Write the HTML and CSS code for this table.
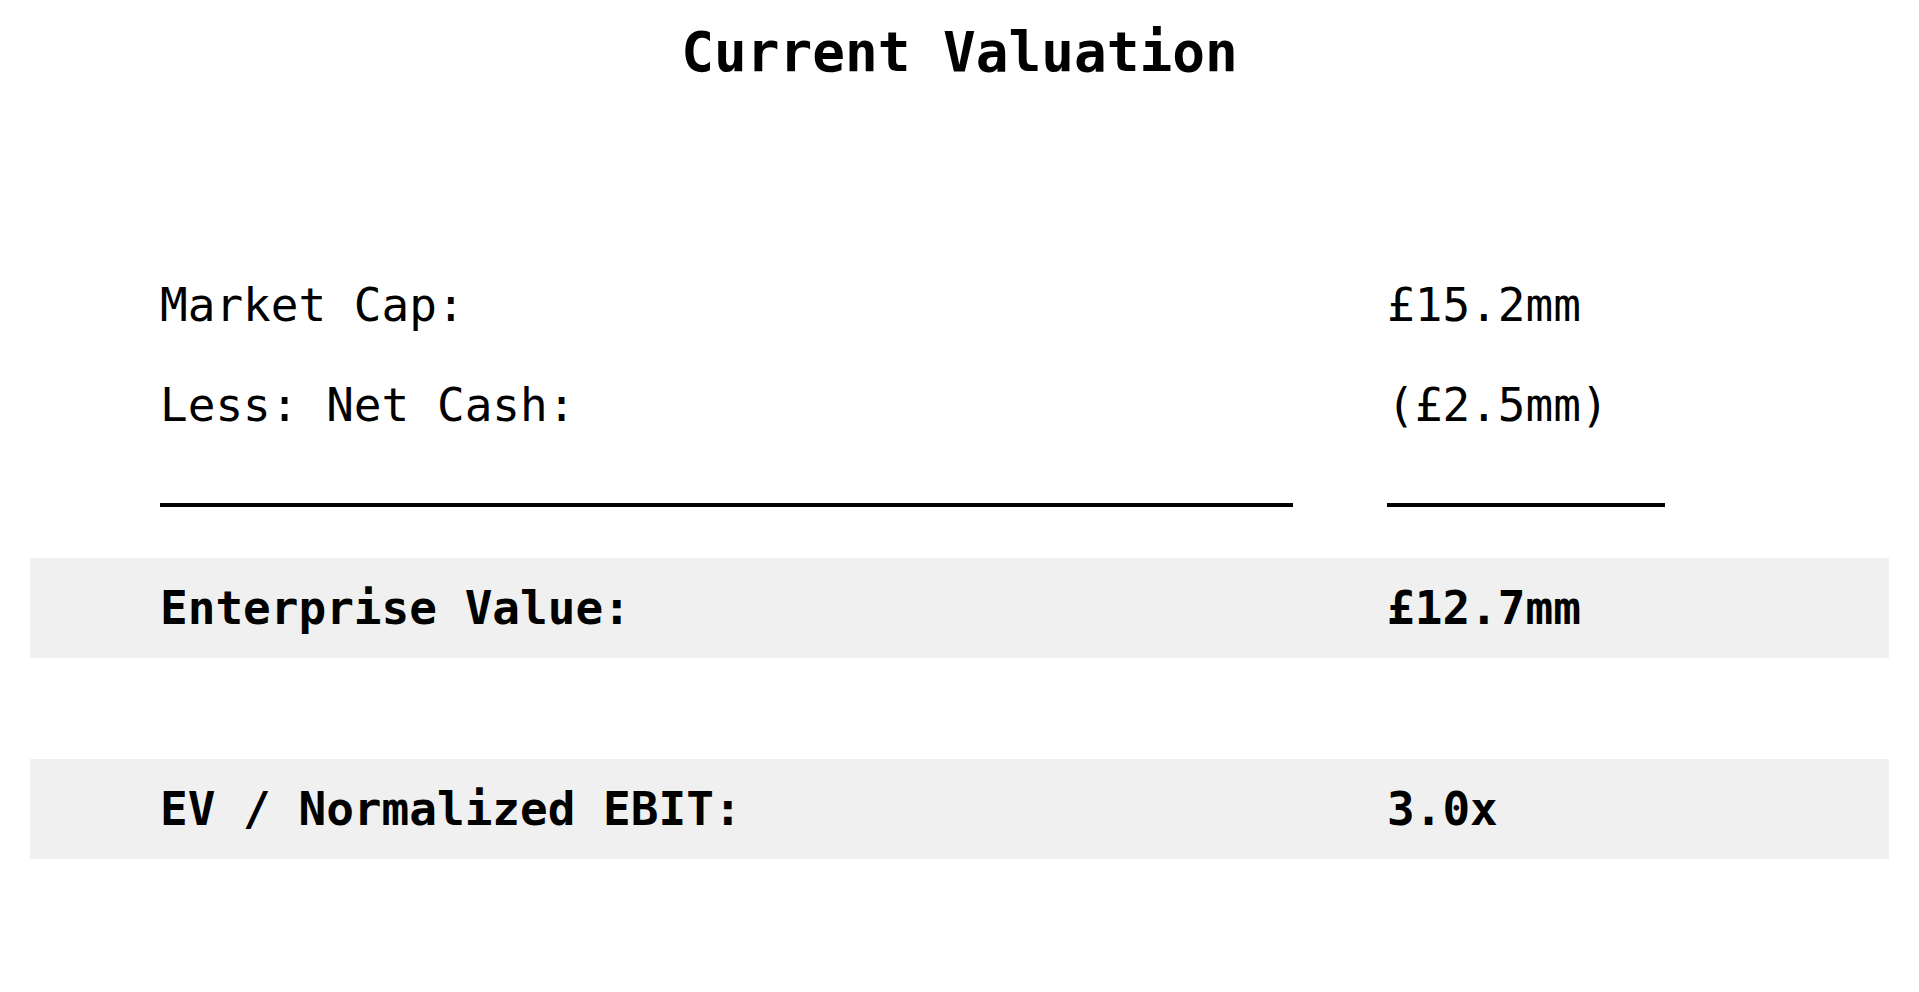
FILE: index.html
```html
<!DOCTYPE html>
<html lang="en">
<head>
<meta charset="utf-8">
<title>Current Valuation</title>
<link rel="stylesheet" href="styles.css">
</head>
<body>
<div class="page">
  <h1 class="title">Current Valuation</h1>
  <div class="table">
    <div class="row">
      <div class="label">Market Cap:</div>
      <div class="value">£15.2mm</div>
    </div>
    <div class="row">
      <div class="label">Less: Net Cash:</div>
      <div class="value">(£2.5mm)</div>
    </div>
    <div class="row rules">
      <div class="label"><div class="rule"></div></div>
      <div class="value"><div class="rule"></div></div>
    </div>
    <div class="row band">
      <div class="label">Enterprise Value:</div>
      <div class="value">£12.7mm</div>
    </div>
    <div class="spacer"></div>
    <div class="row band">
      <div class="label">EV / Normalized EBIT:</div>
      <div class="value">3.0x</div>
    </div>
  </div>
</div>
</body>
</html>
```

FILE: styles.css
```css
html, body {
  margin: 0;
  padding: 0;
  background: #ffffff;
}

.page {
  width: 1919px;
  height: 992px;
  font-family: "DejaVu Sans Mono", "Liberation Mono", monospace;
  color: #000000;
}

.title {
  margin: 0;
  height: 106px;
  line-height: 106px;
  text-align: center;
  font-size: 54.4px;
  font-weight: bold;
}

.table {
  padding-top: 149px;
  margin: 0 30px;
}

.row {
  display: flex;
  align-items: center;
  height: 100px;
  padding-left: 130px;
  font-size: 46px;
  line-height: 100px;
}

.label {
  width: 1133px;
  flex: none;
}

.value {
  margin-left: 94px;
  width: 278px;
  flex: none;
}

.rules {
  margin-bottom: 3px;
}

.rules .label,
.rules .value {
  display: flex;
  align-items: center;
  height: 100px;
}

.rule {
  width: 100%;
  border-top: 4px solid #000000;
}

.band {
  background: #f0f0f0;
  font-weight: bold;
  height: 100px;
  line-height: 92px;
}

.spacer {
  height: 101px;
}
```
